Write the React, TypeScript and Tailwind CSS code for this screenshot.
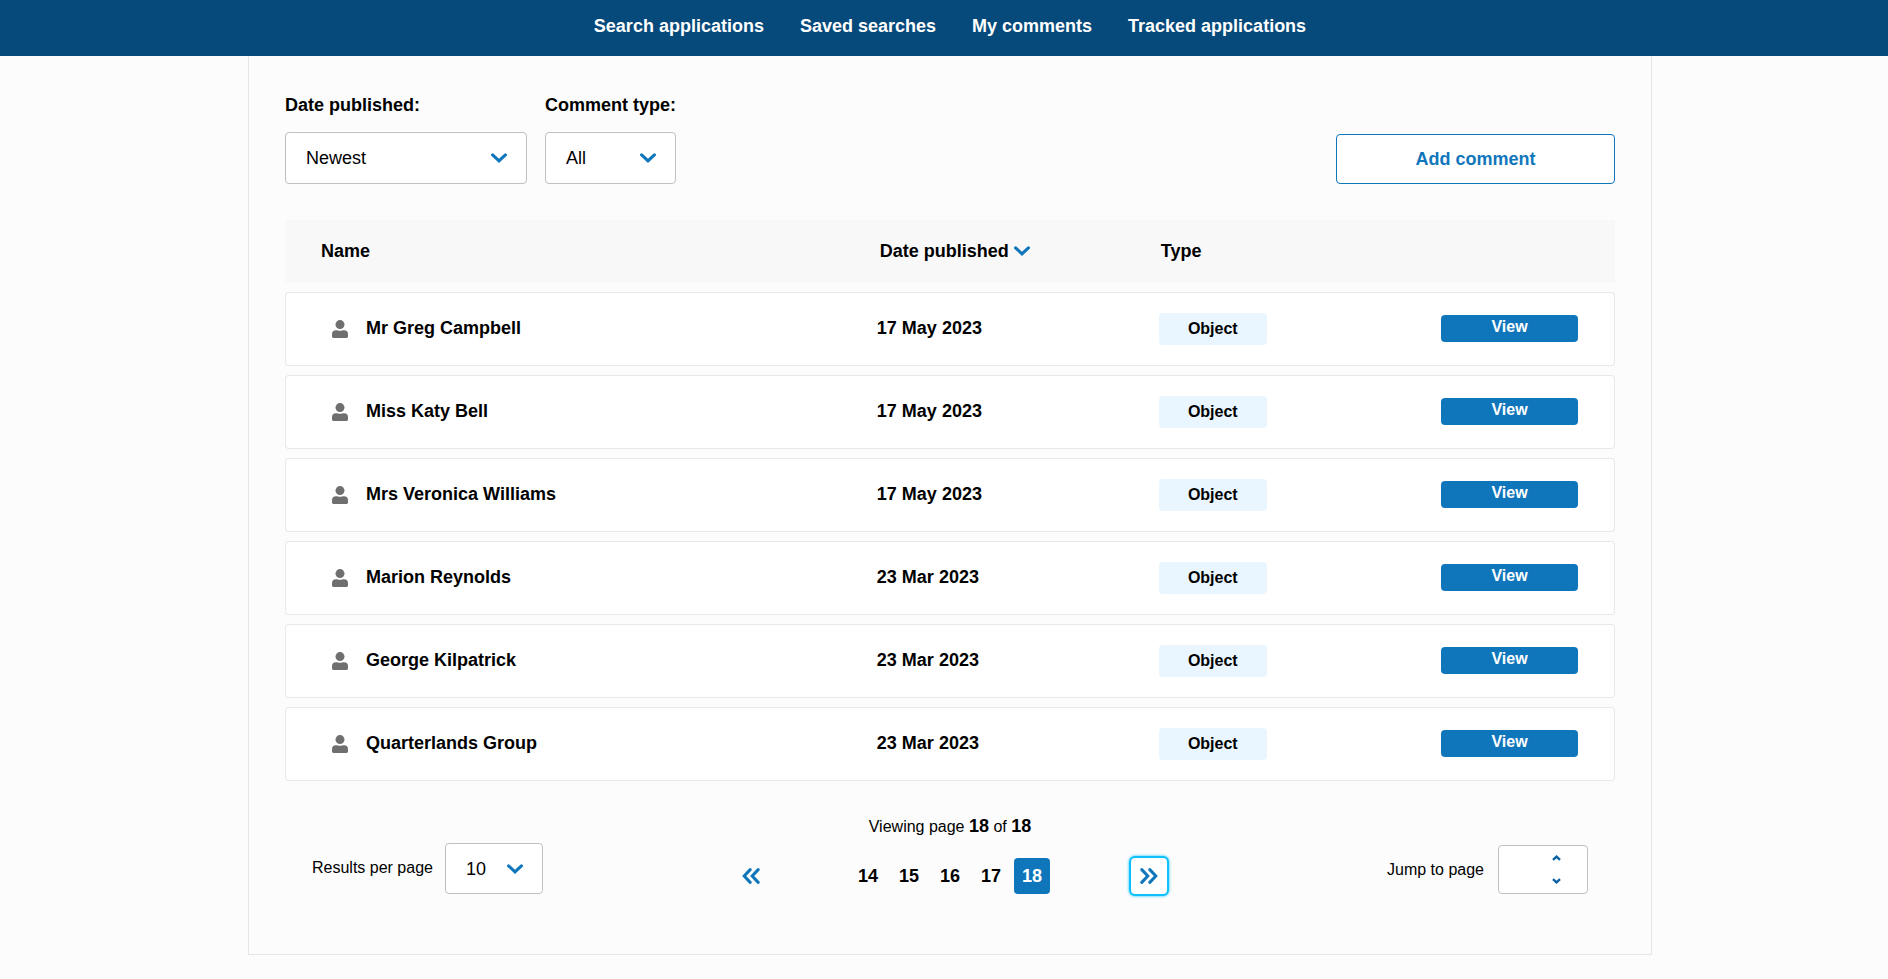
import { useState } from "react";
import type { ReactNode } from "react";

type Comment = { name: string; date: string; type: string };

const navItems = ["Search applications", "Saved searches", "My comments", "Tracked applications"];

const comments: Comment[] = [
  { name: "Mr Greg Campbell", date: "17 May 2023", type: "Object" },
  { name: "Miss Katy Bell", date: "17 May 2023", type: "Object" },
  { name: "Mrs Veronica Williams", date: "17 May 2023", type: "Object" },
  { name: "Marion Reynolds", date: "23 Mar 2023", type: "Object" },
  { name: "George Kilpatrick", date: "23 Mar 2023", type: "Object" },
  { name: "Quarterlands Group", date: "23 Mar 2023", type: "Object" },
];

function ChevronDown({ className = "" }: { className?: string }) {
  return (
    <svg viewBox="0 0 16 10" className={`h-[10px] w-4 ${className}`} aria-hidden="true">
      <path d="M1.6 1.8 8 7.8 14.4 1.8" fill="none" stroke="#1076bc" strokeWidth="3.1" strokeLinecap="round" />
    </svg>
  );
}

function DoubleChevron({ flipped = false }: { flipped?: boolean }) {
  return (
    <svg viewBox="0 0 18 16" className={flipped ? "h-4 w-[18px] rotate-180" : "h-4 w-[18px]"} aria-hidden="true">
      <path
        d="M1.8 1.6 7.8 8 1.8 14.4M9.8 1.6 15.8 8 9.8 14.4"
        fill="none"
        stroke="#1076bc"
        strokeWidth="3"
        strokeLinecap="round"
      />
    </svg>
  );
}

function StepArrow({ up = false }: { up?: boolean }) {
  return (
    <svg viewBox="0 0 9 6" className={up ? "h-[6px] w-[9px] rotate-180" : "h-[6px] w-[9px]"} aria-hidden="true">
      <path d="M1 1.2 4.5 4.4 8 1.2" fill="none" stroke="#0a62a5" strokeWidth="2.4" />
    </svg>
  );
}

function Person() {
  return (
    <svg viewBox="0 0 16 18" className="h-[18px] w-4 shrink-0" fill="#6f6f6f" aria-hidden="true">
      <circle cx="8" cy="4.6" r="4.5" />
      <path d="M4 10.2C5.3 10.2 6.4 10.8 8 10.8S10.7 10.2 12 10.2A4 4 0 0 1 16 14.2V16.6A1.4 1.4 0 0 1 14.6 18H1.4A1.4 1.4 0 0 1 0 16.6V14.2A4 4 0 0 1 4 10.2Z" />
    </svg>
  );
}

function SelectBox({ id, options, className }: { id: string; options: string[]; className: string }) {
  return (
    <div className={`relative ${className}`}>
      <select
        id={id}
        className="h-full w-full appearance-none rounded border border-[#c0c0c0] bg-white pr-10 pl-5 text-lg leading-6"
      >
        {options.map((option) => (
          <option key={option}>{option}</option>
        ))}
      </select>
      <ChevronDown className="pointer-events-none absolute top-1/2 right-5 -translate-y-1/2" />
    </div>
  );
}

function Cell({ children, className = "" }: { children: ReactNode; className?: string }) {
  return <td className={`h-[74px] border-y border-[#e8e8e8] bg-white p-0 ${className}`}>{children}</td>;
}

export default function App() {
  const [page, setPage] = useState(18);
  const [jump, setJump] = useState("");
  const step = (by: number) => setJump(String(Math.min(18, Math.max(1, Number(jump) + by))));

  return (
    <div className="min-h-screen bg-[#fcfcfc] font-['Liberation_Sans',Arial,sans-serif] text-lg leading-6 text-black">
      <header className="bg-[#054a7b] pt-[14px] pb-[18px] pl-3">
        <nav className="flex flex-wrap justify-center gap-x-9 font-bold text-white">
          {navItems.map((item) => (
            <a key={item} href="#">
              {item}
            </a>
          ))}
        </nav>
      </header>

      <div className="pb-6 pl-3">
        <main className="mx-auto max-w-[1404px] border border-t-0 border-[#e6e6e6] px-9 pt-[37px] pb-[60px]">
          <div className="flex items-end justify-between">
            <div className="flex gap-[18px]">
              <div className="flex flex-col gap-[15px]">
                <label htmlFor="date-published" className="font-bold">
                  Date published:
                </label>
                <SelectBox id="date-published" options={["Newest", "Oldest"]} className="h-[52px] w-[242px]" />
              </div>
              <div className="flex flex-col gap-[15px]">
                <label htmlFor="comment-type" className="font-bold">
                  Comment type:
                </label>
                <SelectBox id="comment-type" options={["All", "Object", "Support"]} className="h-[52px] w-[131px]" />
              </div>
            </div>
            <button
              type="button"
              className="h-[50px] w-[279px] rounded border border-[#1076bc] bg-white font-bold text-[#1076bc]"
            >
              Add comment
            </button>
          </div>

          <table className="mt-[27px] w-full table-fixed border-separate border-spacing-x-0 border-spacing-y-[9px] text-left font-bold">
            <colgroup>
              <col className="w-[44.5%]" />
              <col className="w-[21.2%]" />
              <col />
              <col className="w-[174px]" />
            </colgroup>
            <thead>
              <tr className="bg-[#f8f8f8]">
                <th scope="col" className="h-[63px] p-0 pb-[2px] pl-9">
                  Name
                </th>
                <th scope="col" className="p-0 pb-[2px] pl-[3px]">
                  <button type="button" className="flex items-center gap-[5px] font-bold">
                    Date published
                    <ChevronDown />
                  </button>
                </th>
                <th scope="col" className="p-0 pb-[2px] pl-[2px]">
                  Type
                </th>
                <td className="p-0" />
              </tr>
            </thead>
            <tbody>
              {comments.map((comment) => (
                <tr key={comment.name}>
                  <Cell className="rounded-l border-l pl-[46px]">
                    <div className="flex items-center gap-[18px]">
                      <Person />
                      <span className="pb-[2px]">{comment.name}</span>
                    </div>
                  </Cell>
                  <Cell>
                    <span className="block pb-[2px]">{comment.date}</span>
                  </Cell>
                  <Cell>
                    <span className="flex h-8 w-[108px] items-center justify-center rounded bg-[#e9f6ff] text-base">
                      {comment.type}
                    </span>
                  </Cell>
                  <Cell className="rounded-r border-r pr-9 pb-[2px]">
                    <button
                      type="button"
                      className="flex h-[27px] w-full items-center justify-center rounded bg-[#1076bc] pb-[2px] text-base text-white"
                    >
                      View
                    </button>
                  </Cell>
                </tr>
              ))}
            </tbody>
          </table>

          <div className="mt-6 grid grid-cols-[1fr_auto_1fr] items-end px-[27px]">
            <div className="flex items-center gap-3">
              <label htmlFor="per-page" className="pb-[2px] text-base leading-6">
                Results per page
              </label>
              <SelectBox id="per-page" options={["10", "25", "50"]} className="h-[51px] w-[98px]" />
            </div>

            <div className="flex flex-col items-center gap-[19px]">
              <p className="text-base leading-6">
                Viewing page <b className="text-lg leading-6">{page}</b> of <b className="text-lg leading-6">18</b>
              </p>
              <div className="flex items-center gap-[81px] font-bold">
                <button
                  type="button"
                  aria-label="Previous pages"
                  className="flex size-9 items-center justify-center"
                  onClick={() => setPage(Math.max(14, page - 1))}
                >
                  <DoubleChevron flipped />
                </button>
                <div className="flex gap-[5px]">
                  {[14, 15, 16, 17, 18].map((n) => (
                    <button
                      key={n}
                      type="button"
                      onClick={() => setPage(n)}
                      className={n === page ? "size-9 rounded bg-[#1076bc] text-white" : "size-9 rounded"}
                    >
                      {n}
                    </button>
                  ))}
                </div>
                <button
                  type="button"
                  aria-label="Next pages"
                  className="flex size-9 items-center justify-center rounded bg-white shadow-[0_0_0_2px_#0fc0ff,0_0_3px_2px_#0fc0ff]"
                  onClick={() => setPage(Math.min(18, page + 1))}
                >
                  <DoubleChevron />
                </button>
              </div>
            </div>

            <div className="flex items-center justify-end gap-[14px]">
              <label htmlFor="jump" className="text-base leading-6">
                Jump to page
              </label>
              <div className="flex h-[49px] w-[90px] rounded border border-[#c0c0c0] bg-white pr-[21px]">
                <input
                  id="jump"
                  type="text"
                  inputMode="numeric"
                  value={jump}
                  onChange={(event) => setJump(event.target.value)}
                  className="w-full min-w-0 bg-transparent pl-4 outline-none"
                />
                <div className="flex w-5 shrink-0 flex-col">
                  <button
                    type="button"
                    aria-label="Page up"
                    className="flex flex-1 items-center justify-center"
                    onClick={() => step(1)}
                  >
                    <StepArrow up />
                  </button>
                  <button
                    type="button"
                    aria-label="Page down"
                    className="flex flex-1 items-center justify-center"
                    onClick={() => step(-1)}
                  >
                    <StepArrow />
                  </button>
                </div>
              </div>
            </div>
          </div>
        </main>
      </div>
    </div>
  );
}
